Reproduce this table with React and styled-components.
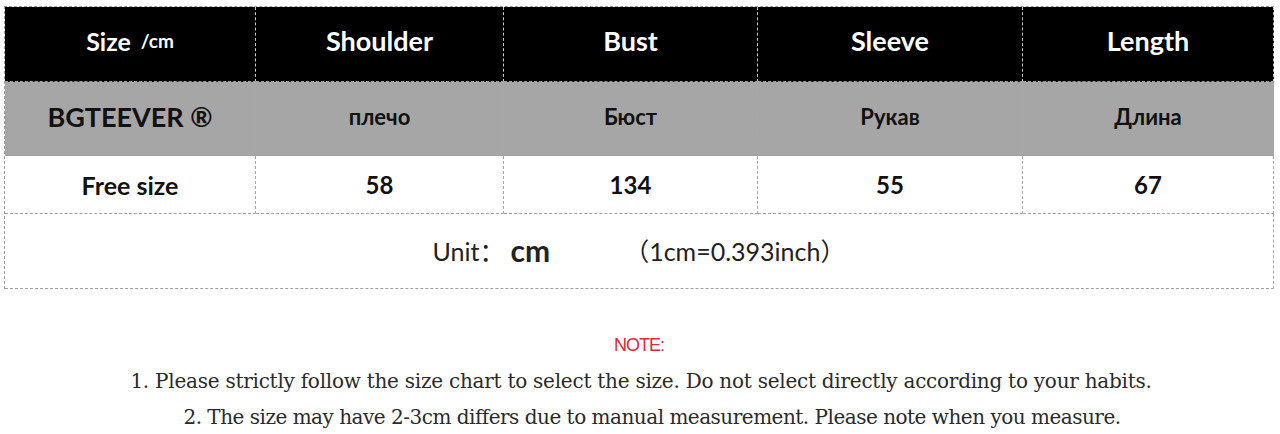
import React from "react";
import styled, { createGlobalStyle } from "styled-components";

const Global = createGlobalStyle`
  body {
    margin: 0;
    background: #fff;
  }
`;

const Page = styled.div`
  width: 1280px;
  height: 434px;
  overflow: hidden;
  padding: 6px 6px 0 4px;
  box-sizing: border-box;
  font-family: Lato, "Open Sans", "Noto Sans CJK SC", sans-serif;
`;

const Chart = styled.div`
  display: grid;
  grid-template-columns: 251px 248px 254px 265px 1fr;
  grid-template-rows: 75px 74px 58px 75px;
  border-top: 1px dashed #9a9a9a;
  border-left: 1px dashed #9a9a9a;
`;

const Cell = styled.div`
  display: flex;
  align-items: center;
  justify-content: center;
  border-right: 1px dashed ${(p) => (p.$kind === "head" ? "#c8c8c8" : "#a8a8a8")};
  border-bottom: 1px dashed #a0a0a0;
  background: ${(p) =>
    p.$kind === "head" ? "#000" : p.$kind === "sub" ? "#a6a6a6" : "#fff"};
  color: ${(p) => (p.$kind === "head" ? "#fff" : "#111")};
  font-weight: 700;
  font-size: ${(p) => p.$size || 22}px;
  padding-bottom: ${(p) => (p.$kind === "head" ? 7 : p.$kind === "sub" ? 4 : 0)}px;
`;

const Small = styled.span`
  font-size: 19px;
  margin-left: 10px;
`;

const UnitRow = styled.div`
  grid-column: 1 / -1;
  display: flex;
  align-items: center;
  justify-content: center;
  border-right: 1px dashed #a8a8a8;
  border-bottom: 1px dashed #a0a0a0;
  color: #222;
  font-size: 25px;
  padding-left: 0;
  padding-bottom: 2px;
`;

const UnitValue = styled.b`
  font-size: 30px;
  margin: 0 74px 0 6px;
`;

const Notes = styled.div`
  display: flex;
  flex-direction: column;
  align-items: center;
  margin-top: 46px;
  font-family: "DejaVu Serif", "Liberation Serif", serif;
  color: #2a2a2a;
  font-size: 20px;
`;

const NoteTitle = styled.div`
  font-family: "Liberation Sans", sans-serif;
  color: #e0283c;
  font-size: 18px;
  height: 28px;
  letter-spacing: -1px;
`;

const Line = styled.div`
  height: 36px;
  line-height: 36px;
  letter-spacing: ${(p) => p.$ls}px;
  margin-left: ${(p) => p.$shift || 0}px;
`;

const heads = ["Shoulder", "Bust", "Sleeve", "Length"];
const subs = ["плечо", "Бюст", "Рукав", "Длина"];
const values = ["58", "134", "55", "67"];

export default function App() {
  return (
    <Page>
      <Global />
      <Chart>
        <Cell $kind="head" $size={25}>
          Size<Small>/cm</Small>
        </Cell>
        {heads.map((h) => (
          <Cell key={h} $kind="head" $size={27}>
            {h}
          </Cell>
        ))}
        <Cell $kind="sub" $size={27}>BGTEEVER ®</Cell>
        {subs.map((s) => (
          <Cell key={s} $kind="sub" $size={22}>
            {s}
          </Cell>
        ))}
        <Cell $size={25}>Free size</Cell>
        {values.map((v) => (
          <Cell key={v} $size={24}>
            {v}
          </Cell>
        ))}
        <UnitRow>
          Unit：<UnitValue>cm</UnitValue>（1cm=0.393inch）
        </UnitRow>
      </Chart>
      <Notes>
        <NoteTitle>NOTE:</NoteTitle>
        <Line $ls={-0.25} $shift={4}>
          1. Please strictly follow the size chart to select the size. Do not select directly according to your habits.
        </Line>
        <Line $ls={-0.5} $shift={26}>
          2. The size may have 2-3cm differs due to manual measurement. Please note when you measure.
        </Line>
      </Notes>
    </Page>
  );
}
